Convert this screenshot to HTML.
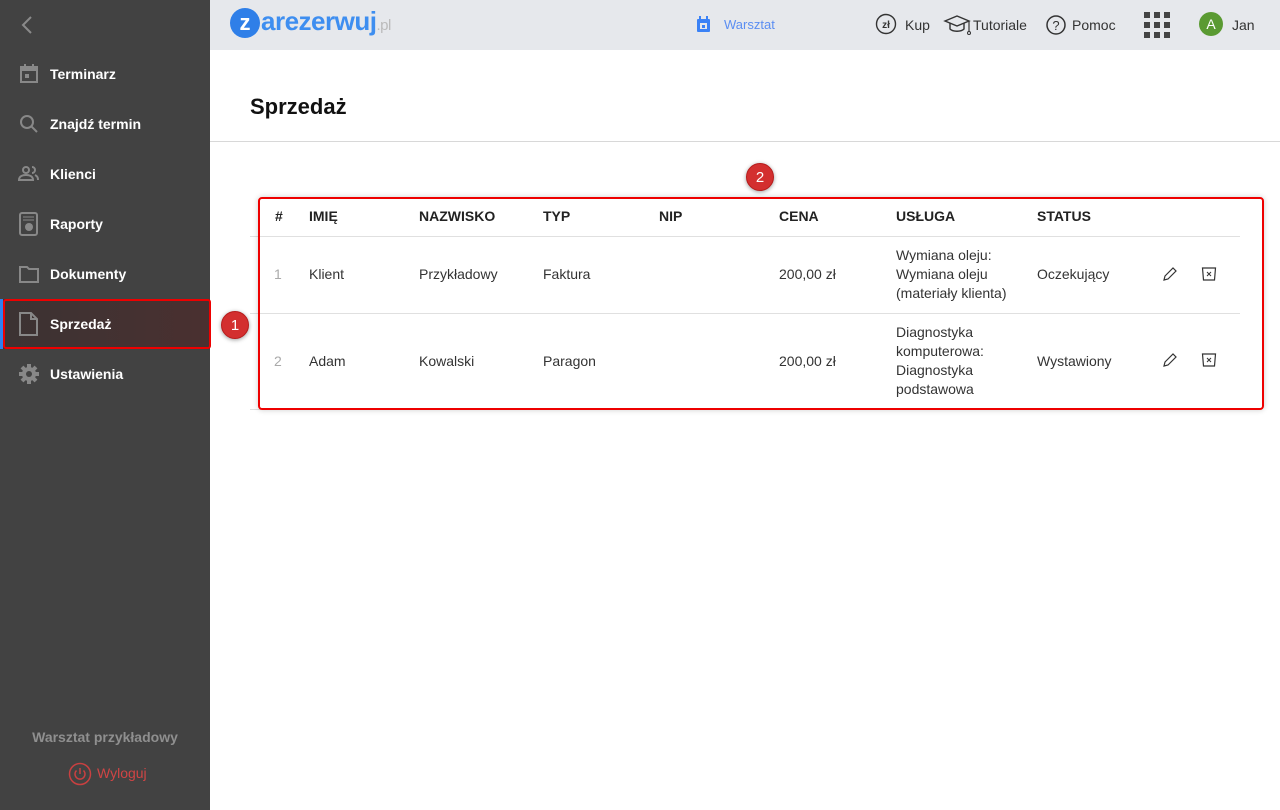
<!DOCTYPE html>
<html><head><meta charset="utf-8"><style>
*{margin:0;padding:0;box-sizing:border-box}
body{width:1280px;height:810px;overflow:hidden;font-family:"Liberation Sans",sans-serif;background:#fff;position:relative}
.side{position:absolute;left:0;top:0;width:210px;height:810px;background:#424242}
.item{position:absolute;left:0;width:210px;height:50px;color:#fff;font-size:14px;font-weight:bold;display:flex;align-items:center}
.item svg{position:absolute;left:18px}
.item span{position:absolute;left:50px}
.top{position:absolute;left:210px;top:0;width:1070px;height:50px;background:#e6e8ec}
.t{position:absolute;font-size:14px;color:#333}
.th{position:absolute;font-size:14px;font-weight:bold;color:#222}
.td{position:absolute;font-size:14px;color:#333;line-height:19px}
.hl{position:absolute;left:250px;width:990px;height:1px;background:#e0e0e0}
.badge{position:absolute;width:28px;height:28px;border-radius:50%;background:#d32f2f;color:#fff;font-size:15px;text-align:center;line-height:28px;box-shadow:0 1px 4px rgba(0,0,0,.4);border:1px solid #b71c1c}
</style></head><body>
<div class="side">
<svg style="position:absolute;left:18px;top:14px" width="18" height="22"><path d="M13 3L5 11l8 8" stroke="#8a8a8a" stroke-width="2" fill="none"/></svg>
<div class="item" style="top:49px"><svg width="22" height="22"><rect x="3" y="4" width="16" height="15" fill="none" stroke="#888" stroke-width="2"/><rect x="3" y="4" width="16" height="4" fill="#888"/><rect x="6" y="1" width="2" height="4" fill="#888"/><rect x="14" y="1" width="2" height="4" fill="#888"/><rect x="7" y="11" width="4" height="4" fill="#888"/></svg><span>Terminarz</span></div>
<div class="item" style="top:99px"><svg width="22" height="22"><circle cx="9" cy="9" r="6" fill="none" stroke="#888" stroke-width="2"/><path d="M13 13l6 6" stroke="#888" stroke-width="2"/></svg><span>Znajdź termin</span></div>
<div class="item" style="top:149px"><svg width="22" height="22"><circle cx="8" cy="7" r="3" fill="none" stroke="#888" stroke-width="2"/><path d="M1 17c0-4 4-5 7-5s7 1 7 5z" fill="none" stroke="#888" stroke-width="2"/><path d="M14 4a3 3 0 0 1 0 6M17 12c2 1 3 2 3 5" stroke="#888" stroke-width="2" fill="none"/></svg><span>Klienci</span></div>
<div class="item" style="top:199px"><svg width="22" height="24"><rect x="2" y="1" width="17" height="22" rx="2" fill="none" stroke="#888" stroke-width="2"/><path d="M5 5h11M5 8h11" stroke="#888"/><circle cx="11" cy="15" r="4" fill="#888"/></svg><span>Raporty</span></div>
<div class="item" style="top:249px"><svg width="22" height="22"><path d="M2 4h7l2 2h9v13H2z" fill="none" stroke="#888" stroke-width="2"/></svg><span>Dokumenty</span></div>
<div class="item" style="top:299px;background:linear-gradient(90deg,#3b3333,#4a3030)"><div style="position:absolute;left:0;top:0;width:3px;height:50px;background:#2f80ed"></div><svg width="22" height="24"><path d="M2 1h11l6 6v16H2z" fill="none" stroke="#888" stroke-width="2"/><path d="M13 1v6h6" fill="none" stroke="#888" stroke-width="2"/></svg><span>Sprzedaż</span></div>
<div class="item" style="top:349px"><svg width="22" height="22"><circle cx="11" cy="11" r="7" fill="#888"/><path d="M11 1v20M1 11h20M4 4l14 14M18 4L4 18" stroke="#888" stroke-width="4"/><circle cx="11" cy="11" r="3" fill="#424242"/></svg><span>Ustawienia</span></div>
<div style="position:absolute;left:0;top:729px;width:210px;text-align:center;color:#8f8f8f;font-size:14px;font-weight:bold">Warsztat przykładowy</div>
<svg style="position:absolute;left:68px;top:762px" width="24" height="24"><circle cx="12" cy="12" r="10.5" fill="none" stroke="#c94040" stroke-width="1.5"/><path d="M8.5 8.5a5 5 0 1 0 7 0M12 6v6" fill="none" stroke="#c94040" stroke-width="1.5"/></svg>
<div style="position:absolute;left:97px;top:765px;color:#d04545;font-size:14px">Wyloguj</div>
</div>
<div style="position:absolute;left:3px;top:299px;width:208px;height:50px;border:2px solid #e00;border-radius:3px"></div>
<div class="badge" style="left:221px;top:311px">1</div>
<div class="top">
<div style="position:absolute;left:20px;top:8px;width:30px;height:30px;border-radius:50%;background:#2f7fe8;color:#fff;font-weight:bold;font-size:22px;text-align:center;line-height:29px">z</div>
<div style="position:absolute;left:51px;top:6px;font-size:26px;font-weight:bold;color:#3e8ef0;letter-spacing:-0.5px">arezerwuj<span style="font-size:15px;color:#bbb;font-weight:normal">.pl</span></div>
<svg style="position:absolute;left:486px;top:16px" width="16" height="17"><rect x="1" y="3" width="13" height="13" rx="1" fill="#3b82f6"/><rect x="4" y="7" width="7" height="6" fill="#e6e8ec"/><rect x="6" y="9" width="3" height="3" fill="#3b82f6"/><rect x="3" y="0" width="2" height="4" fill="#3b82f6"/><rect x="10" y="0" width="2" height="4" fill="#3b82f6"/></svg>
<div class="t" style="left:514px;top:17px;font-size:13px;color:#5b8ef2">Warsztat</div>
<svg style="position:absolute;left:665px;top:13px" width="22" height="22"><circle cx="11" cy="11" r="9.5" fill="none" stroke="#333" stroke-width="1.4"/><text x="11" y="15" font-size="10" font-family="Liberation Sans" text-anchor="middle" fill="#333" font-weight="bold">zł</text></svg>
<div class="t" style="left:695px;top:17px">Kup</div>
<svg style="position:absolute;left:733px;top:14px" width="28" height="22"><path d="M2 7l12-5 12 5-12 5z" fill="none" stroke="#333" stroke-width="1.4"/><path d="M7 9v6c3 3 11 3 14 0V9" fill="none" stroke="#333" stroke-width="1.4"/><path d="M26 7v11" stroke="#333" stroke-width="1.2"/><circle cx="26" cy="19" r="1.5" fill="none" stroke="#333"/></svg>
<div class="t" style="left:763px;top:17px">Tutoriale</div>
<svg style="position:absolute;left:836px;top:14px" width="22" height="22"><circle cx="10" cy="11" r="9" fill="none" stroke="#333" stroke-width="1.5"/><text x="10" y="16" font-size="13" font-family="Liberation Sans" text-anchor="middle" fill="#333">?</text></svg>
<div class="t" style="left:862px;top:17px">Pomoc</div>
<svg style="position:absolute;left:934px;top:12px" width="26" height="26"><g fill="#444"><rect x="0" y="0" width="6" height="6"/><rect x="10" y="0" width="6" height="6"/><rect x="20" y="0" width="6" height="6"/><rect x="0" y="10" width="6" height="6"/><rect x="10" y="10" width="6" height="6"/><rect x="20" y="10" width="6" height="6"/><rect x="0" y="20" width="6" height="6"/><rect x="10" y="20" width="6" height="6"/><rect x="20" y="20" width="6" height="6"/></g></svg>
<div style="position:absolute;left:989px;top:12px;width:24px;height:24px;border-radius:50%;background:#5a9a32;color:#fff;font-size:14px;text-align:center;line-height:24px">A</div>
<div class="t" style="left:1022px;top:17px">Jan</div>
</div>
<div style="position:absolute;left:250px;top:94px;font-size:22px;font-weight:bold;color:#111">Sprzedaż</div>
<div style="position:absolute;left:210px;top:141px;width:1070px;height:1px;background:#d8d8d8"></div>
<div class="th" style="left:275px;top:208px">#</div>
<div class="th" style="left:309px;top:208px">IMIĘ</div>
<div class="th" style="left:419px;top:208px">NAZWISKO</div>
<div class="th" style="left:543px;top:208px">TYP</div>
<div class="th" style="left:659px;top:208px">NIP</div>
<div class="th" style="left:779px;top:208px">CENA</div>
<div class="th" style="left:896px;top:208px">USŁUGA</div>
<div class="th" style="left:1037px;top:208px">STATUS</div>
<div class="hl" style="top:236px"></div>
<div class="td" style="left:274px;top:265px;color:#aaa">1</div>
<div class="td" style="left:309px;top:265px">Klient</div>
<div class="td" style="left:419px;top:265px">Przykładowy</div>
<div class="td" style="left:543px;top:265px">Faktura</div>
<div class="td" style="left:779px;top:265px">200,00 zł</div>
<div class="td" style="left:896px;top:246px">Wymiana oleju:<br>Wymiana oleju<br>(materiały klienta)</div>
<div class="td" style="left:1037px;top:265px">Oczekujący</div>
<div class="hl" style="top:313px"></div>
<div class="td" style="left:274px;top:352px;color:#aaa">2</div>
<div class="td" style="left:309px;top:352px">Adam</div>
<div class="td" style="left:419px;top:352px">Kowalski</div>
<div class="td" style="left:543px;top:352px">Paragon</div>
<div class="td" style="left:779px;top:352px">200,00 zł</div>
<div class="td" style="left:896px;top:323px">Diagnostyka<br>komputerowa:<br>Diagnostyka<br>podstawowa</div>
<div class="td" style="left:1037px;top:352px">Wystawiony</div>
<div class="hl" style="top:409px"></div>
<svg style="position:absolute;left:1162px;top:266px" width="16" height="16"><path d="M2 14l1-4 8-8 3 3-8 8z" fill="none" stroke="#333" stroke-width="1.2"/></svg>
<svg style="position:absolute;left:1162px;top:352px" width="16" height="16"><path d="M2 14l1-4 8-8 3 3-8 8z" fill="none" stroke="#333" stroke-width="1.2"/></svg>
<svg style="position:absolute;left:1201px;top:266px" width="16" height="16"><path d="M1.5 2h13l-1 12h-11z" fill="none" stroke="#333" stroke-width="1.2"/><path d="M6 6l4 4M10 6l-4 4" stroke="#333"/></svg>
<svg style="position:absolute;left:1201px;top:352px" width="16" height="16"><path d="M1.5 2h13l-1 12h-11z" fill="none" stroke="#333" stroke-width="1.2"/><path d="M6 6l4 4M10 6l-4 4" stroke="#333"/></svg>
<div style="position:absolute;left:258px;top:197px;width:1006px;height:213px;border:2px solid #e00;border-radius:4px;box-shadow:0 0 6px rgba(0,0,0,.2)"></div>
<div class="badge" style="left:746px;top:163px">2</div>
</body></html>
